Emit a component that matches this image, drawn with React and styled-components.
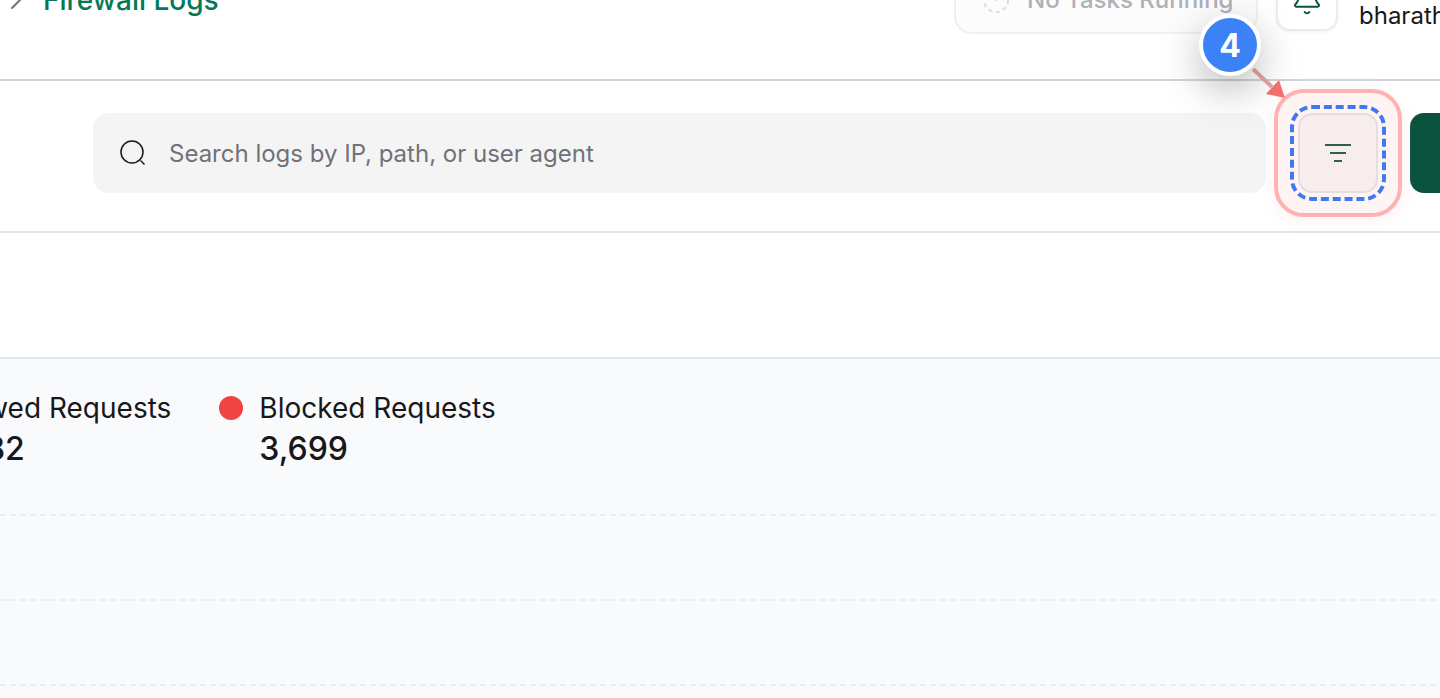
import React from "react";
import styled, { createGlobalStyle } from "styled-components";
import { ChevronRight, Bell } from "lucide-react";

const Global = createGlobalStyle`
  html, body {
    margin: 0;
    padding: 0;
    background: #fff;
  }
  body {
    font-family: Inter, "Liberation Sans", sans-serif;
    color: #18181b;
    overflow: hidden;
  }
`;

const Page = styled.div`
  position: relative;
  width: 1440px;
  height: 698px;
  overflow: hidden;
  display: flex;
  flex-direction: column;
`;

// the page is scrolled, so the top half of the header sits above the window
const Header = styled.header`
  flex: none;
  height: 121px;
  margin-top: -40px;
  padding-bottom: 40px;
  box-sizing: border-box;
  border-bottom: 2px solid #d4d4d8;
  display: flex;
  align-items: center;
`;

const Crumb = styled.div`
  flex: 1;
  display: flex;
  align-items: center;
  gap: 11px;
  color: #71717a;
  span {
    color: #047857;
    font-size: 28px;
    font-weight: 500;
    line-height: 36px;
  }
`;

const TaskPill = styled.div`
  width: 304px;
  height: 68px;
  box-sizing: border-box;
  border: 2px solid #f0f0f1;
  border-radius: 18px;
  background: #fcfcfc;
  display: flex;
  align-items: center;
  gap: 17px;
  padding-left: 26px;
  color: #b0b0b6;
  font-size: 24px;
  font-weight: 500;
`;

const BellButton = styled.div`
  width: 62px;
  height: 62px;
  margin-left: 18px;
  box-sizing: border-box;
  border: 2px solid #ececee;
  border-radius: 14px;
  background: #fff;
  box-shadow: 0 1px 3px rgba(0, 0, 0, 0.06);
  color: #0b5240;
  display: flex;
  align-items: center;
  justify-content: center;
`;

const UserName = styled.div`
  width: 81px;
  margin: 32px 0 0 21px;
  font-size: 24px;
  line-height: 32px;
  white-space: nowrap;
`;

const Toolbar = styled.div`
  flex: none;
  display: flex;
  gap: 32px;
  padding: 32px 0 38px 93px;
  border-bottom: 2px solid #e4e4e7;
`;

const SearchBox = styled.div`
  width: 1173px;
  height: 80px;
  flex: none;
  box-sizing: border-box;
  background: #f4f4f5;
  border-radius: 16px;
  display: flex;
  align-items: center;
  gap: 23px;
  padding-left: 27px;
  color: #71717a;
  font-size: 24px;
`;

const FilterButton = styled.div`
  width: 80px;
  height: 80px;
  flex: none;
  box-sizing: border-box;
  border: 2px solid #e4e4e7;
  border-radius: 14px;
  background: #f6f7f7;
  color: #0b5240;
  display: flex;
  align-items: center;
  justify-content: center;
`;

const PrimaryButton = styled.div`
  width: 120px;
  height: 80px;
  flex: none;
  border-radius: 14px;
  background: #0a523d;
`;

const Spacer = styled.div`
  height: 124px;
  flex: none;
`;

const Chart = styled.section`
  flex: 1;
  background: #f9fafc;
  border-top: 2px solid #e2e8f0;
  padding-top: 31px;
`;

const Legend = styled.div`
  display: flex;
  gap: 48px;
  margin-left: -104px;
`;

const LegendItem = styled.div`
  display: grid;
  grid-template-columns: 24px auto;
  column-gap: 16px;
  align-items: center;
`;

const Dot = styled.i`
  width: 24px;
  height: 24px;
  border-radius: 50%;
  background: ${(p) => p.$color};
`;

const LegendLabel = styled.div`
  font-size: 28px;
  line-height: 36px;
  white-space: nowrap;
`;

const LegendValue = styled.div`
  grid-column: 2;
  margin-top: 1px;
  font-size: 32px;
  font-weight: 500;
  line-height: 44px;
`;

const GridLines = styled.div`
  margin-top: 43px;
  display: flex;
  flex-direction: column;
  gap: 83px;
`;

const GridLine = styled.div`
  height: 2px;
  background: repeating-linear-gradient(90deg, #eceef1 0 6px, transparent 6px 10px);
`;

const Ring = styled.div`
  position: absolute;
  left: 1274px;
  top: 89px;
  width: 128px;
  height: 128px;
  box-sizing: border-box;
  border: 4px solid #feb2b2;
  border-radius: 30px;
  background: rgba(254, 178, 178, 0.14);
  box-shadow: 0 4px 16px rgba(254, 178, 178, 0.2);
  z-index: 1;
`;

const Dashed = styled.div`
  position: absolute;
  left: 1290px;
  top: 105px;
  width: 96px;
  height: 96px;
  box-sizing: border-box;
  border: 4px dashed #4178ee;
  border-radius: 22px;
  z-index: 2;
`;

const Badge = styled.div`
  position: absolute;
  left: 1199px;
  top: 14px;
  width: 62px;
  height: 62px;
  box-sizing: border-box;
  border: 4px solid #fff;
  border-radius: 50%;
  background: #3b82f6;
  color: #fff;
  font-size: 32px;
  font-weight: 700;
  display: flex;
  align-items: center;
  justify-content: center;
  box-shadow: 0 14px 40px rgba(0, 0, 0, 0.28);
  z-index: 4;
`;

const Arrow = styled.svg`
  position: absolute;
  left: 1240px;
  top: 60px;
  z-index: 3;
`;

const TaskIcon = () => (
  <svg width="28" height="28" viewBox="0 0 28 28" fill="none" stroke="#dcdce0" strokeWidth="2">
    <circle cx="14" cy="14" r="12" strokeDasharray="4 3.5" />
    <path d="M14 8v7" />
  </svg>
);

const SearchIcon = () => (
  <svg width="26" height="26" viewBox="0 0 26 26" fill="none" stroke="#18181b" strokeWidth="1.5">
    <circle cx="12" cy="12" r="11" />
    <path d="M20.5 20.5l4 4" />
  </svg>
);

const FilterIcon = () => (
  <svg width="26" height="18" viewBox="0 0 26 18" fill="none" stroke="currentColor" strokeWidth="2">
    <path d="M0 1h26M5 9h16M9 17h8" />
  </svg>
);

export default function App() {
  return (
    <Page>
      <Global />
      <Header>
        <Crumb>
          <ChevronRight size={32} strokeWidth={1.5} />
          <span>Firewall Logs</span>
        </Crumb>
        <TaskPill>
          <TaskIcon />
          No Tasks Running
        </TaskPill>
        <BellButton>
          <Bell size={32} strokeWidth={1.5} />
        </BellButton>
        <UserName>bharath</UserName>
      </Header>
      <Toolbar>
        <SearchBox>
          <SearchIcon />
          Search logs by IP, path, or user agent
        </SearchBox>
        <FilterButton>
          <FilterIcon />
        </FilterButton>
        <PrimaryButton />
      </Toolbar>
      <Spacer />
      <Chart>
        <Legend>
          <LegendItem>
            <Dot $color="#10b981" />
            <LegendLabel>Allowed Requests</LegendLabel>
            <LegendValue>4,382</LegendValue>
          </LegendItem>
          <LegendItem>
            <Dot $color="#ef4444" />
            <LegendLabel>Blocked Requests</LegendLabel>
            <LegendValue>3,699</LegendValue>
          </LegendItem>
        </Legend>
        <GridLines>
          <GridLine />
          <GridLine />
          <GridLine />
        </GridLines>
      </Chart>
      <Ring />
      <Dashed />
      <Arrow width="60" height="50" viewBox="0 0 60 50">
        <line x1="13" y1="9" x2="32" y2="27" stroke="#e9a3a3" strokeWidth="4" />
        <polygon points="45,38 26,34 39,20" fill="#f87171" />
      </Arrow>
      <Badge>4</Badge>
    </Page>
  );
}
